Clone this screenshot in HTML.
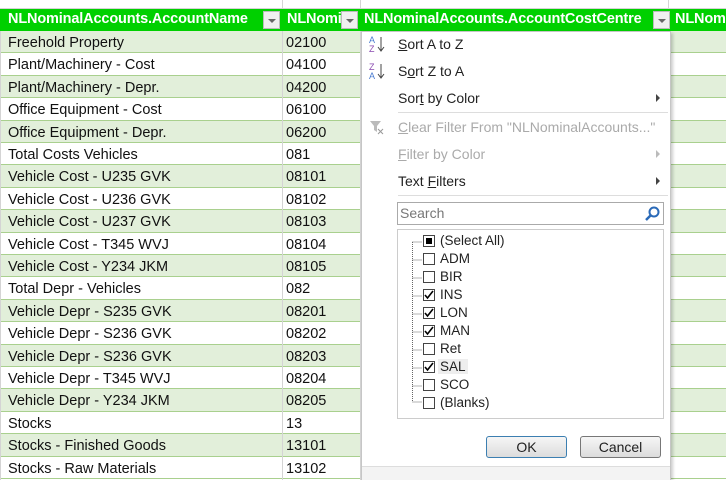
<!DOCTYPE html><html><head><style>
*{margin:0;padding:0;box-sizing:border-box}
body{width:726px;height:480px;overflow:hidden;background:#fff;font-family:"Liberation Sans",Calibri,sans-serif;position:relative;font-size:14.5px}
.top{position:absolute;left:0;top:0;width:726px;height:9px;border-bottom:1px solid #d4d4d4}
.vl{position:absolute;top:0;height:9px;border-left:1px solid #d4d4d4}
.hdr{position:absolute;left:0;top:9px;width:726px;height:22px;background:#00d000;color:#fff;font-weight:bold;font-size:14.5px;letter-spacing:-0.15px}
.hdr span{position:absolute;top:2px}
.fb{position:absolute;top:2px;width:17px;height:18px;background:#f0f0f0;border:1px solid #bbb}
.fb:after{content:"";position:absolute;left:4px;top:7px;border-left:4px solid transparent;border-right:4px solid transparent;border-top:4px solid #666}
.row{position:absolute;left:0;width:726px;height:22.4px;border-bottom:1px solid #a9d08e}
.row.g{background:#e2efda}
.row span{position:absolute;top:4px;color:#111}
.cl{position:absolute;top:31px;height:449px;border-left:1px solid #d4d4d4}
.menu{position:absolute;left:361px;top:31px;width:310px;height:449px;background:#fff;border:1px solid #c6c6c6;box-shadow:2px 2px 3px rgba(0,0,0,.2);color:#222;font-size:14px}
.mi{position:absolute;left:36px}
.dis{color:#aaa}
.arr{position:absolute;left:294px;width:0;height:0;border-top:4px solid transparent;border-bottom:4px solid transparent;border-left:4px solid #444}
.sep{position:absolute;left:36px;width:270px;border-top:1px solid #ddd}
.search{position:absolute;left:35px;top:170px;width:267px;height:23px;border:1px solid #aaa;color:#777;padding:2px 2px;font-size:14px}
.list{position:absolute;left:35px;top:197px;width:267px;height:190px;border:1px solid #ccc}
.it{position:absolute;left:25px;height:18px;font-size:13.5px}
.cb{position:absolute;left:0;top:2px;width:12px;height:12px;border:1px solid #444;background:#fff}
.it .t{position:absolute;left:17px;top:0;white-space:nowrap}
.btn{position:absolute;top:404px;width:81px;height:22px;border:1px solid #777;border-radius:3px;background:linear-gradient(#f6f6f6,#dcdcdc);text-align:center;line-height:20px;font-size:14px}
u{text-decoration:underline}
</style></head><body>
<div class="top"></div>
<div class="vl" style="left:282px"></div><div class="vl" style="left:360px"></div><div class="vl" style="left:668px"></div>
<div class="hdr">
<span style="left:8px">NLNominalAccounts.AccountName</span><div class="fb" style="left:263px"></div>
<span style="left:287px">NLNomi</span><div class="fb" style="left:341px"></div>
<span style="left:364px">NLNominalAccounts.AccountCostCentre</span><div class="fb" style="left:653px"></div>
<span style="left:675px">NLNom</span>
</div>
<div id="rows"></div>
<div class="cl" style="left:282px"></div><div class="cl" style="left:360px"></div><div class="cl" style="left:0px"></div>
<script>
var d=[["Freehold Property","02100"],["Plant/Machinery - Cost","04100"],["Plant/Machinery - Depr.","04200"],["Office Equipment - Cost","06100"],["Office Equipment - Depr.","06200"],["Total Costs Vehicles","081"],["Vehicle Cost - U235 GVK","08101"],["Vehicle Cost - U236 GVK","08102"],["Vehicle Cost - U237 GVK","08103"],["Vehicle Cost - T345 WVJ","08104"],["Vehicle Cost - Y234 JKM","08105"],["Total Depr - Vehicles","082"],["Vehicle Depr - S235 GVK","08201"],["Vehicle Depr - S236 GVK","08202"],["Vehicle Depr - S236 GVK","08203"],["Vehicle Depr - T345 WVJ","08204"],["Vehicle Depr - Y234 JKM","08205"],["Stocks","13"],["Stocks - Finished Goods","13101"],["Stocks - Raw Materials","13102"]];
var h="";for(var i=0;i<d.length;i++){h+='<div class="row'+(i%2==0?' g':'')+'" style="top:'+(31+i*22.4)+'px"><span style="left:8px">'+d[i][0]+'</span><span style="left:286px">'+d[i][1]+'</span></div>'}
document.getElementById("rows").innerHTML=h;
</script>
<div class="menu">
<svg style="position:absolute;left:7px;top:3px" width="18" height="18"><text x="0" y="8" font-size="9" fill="#4a7bd0" font-family="Liberation Sans">A</text><text x="0" y="17" font-size="9" fill="#8a4ab0" font-family="Liberation Sans">Z</text><path d="M12 2v13M9 12l3 4 3-4" stroke="#444" fill="none"/></svg>
<div class="mi" style="top:4px"><u>S</u>ort A to Z</div>
<svg style="position:absolute;left:7px;top:30px" width="18" height="18"><text x="0" y="8" font-size="9" fill="#8a4ab0" font-family="Liberation Sans">Z</text><text x="0" y="17" font-size="9" fill="#4a7bd0" font-family="Liberation Sans">A</text><path d="M12 2v13M9 12l3 4 3-4" stroke="#444" fill="none"/></svg>
<div class="mi" style="top:31px">S<u>o</u>rt Z to A</div>
<div class="mi" style="top:58px">Sor<u>t</u> by Color</div><div class="arr" style="top:62px"></div>
<div class="sep" style="top:80px"></div>
<svg style="position:absolute;left:7px;top:88px" width="16" height="16"><path d="M1 1h11l-4 5v6l-3-2V6z" fill="#bbb"/><path d="M9 9l5 5M14 9l-5 5" stroke="#999"/></svg>
<div class="mi dis" style="top:87px"><u>C</u>lear Filter From "NLNominalAccounts..."</div>
<div class="mi dis" style="top:114px"><u>F</u>ilter by Color</div><div class="arr" style="top:118px;border-left-color:#bbb"></div>
<div class="mi" style="top:141px">Text <u>F</u>ilters</div><div class="arr" style="top:145px"></div>
<div class="sep" style="top:163px"></div>
<div class="search">Search<svg style="position:absolute;right:3px;top:3px" width="15" height="15"><circle cx="9" cy="6" r="4.5" stroke="#2a6ab8" stroke-width="2" fill="none"/><path d="M6 9l-5 5" stroke="#2a6ab8" stroke-width="2.5"/></svg></div>
<div class="list">
<svg style="position:absolute;left:13px;top:0" width="20" height="190"><path d="M1.5 12v160M1.5 12h10M1.5 30h10M1.5 48h10M1.5 66h10M1.5 84h10M1.5 102h10M1.5 120h10M1.5 138h10M1.5 156h10M1.5 172h10" stroke="#666" stroke-dasharray="1 1"/></svg>
<div id="items"></div>
</div>
<div class="btn" style="left:124px;border-color:#3c7fb1;border-width:1px">OK</div>
<div class="btn" style="left:218px">Cancel</div>
<div style="position:absolute;left:0;top:434px;width:308px;height:14px;border-top:1px solid #ddd;background:#f3f3f3"></div>
</div>
<script>
var it=[["(Select All)",2],["ADM",0],["BIR",0],["INS",1],["LON",1],["MAN",1],["Ret",0],["SAL",1],["SCO",0],["(Blanks)",0]];
var s="";for(var i=0;i<it.length;i++){var c=it[i][1];s+='<div class="it" style="top:'+(3+i*18)+'px"><div class="cb">'+(c==2?'<div style="position:absolute;left:2px;top:2px;width:6px;height:6px;background:#000"></div>':c==1?'<svg width="10" height="10" style="position:absolute;left:0;top:0"><path d="M1 5l2.5 3L9 1" stroke="#000" stroke-width="1.6" fill="none"/></svg>':'')+'</div><span class="t"'+(i==7?' style="background:#eee;padding:0 2px;left:15px"':'')+'>'+it[i][0]+'</span></div>'}
document.getElementById("items").innerHTML=s;
</script>
</body></html>
